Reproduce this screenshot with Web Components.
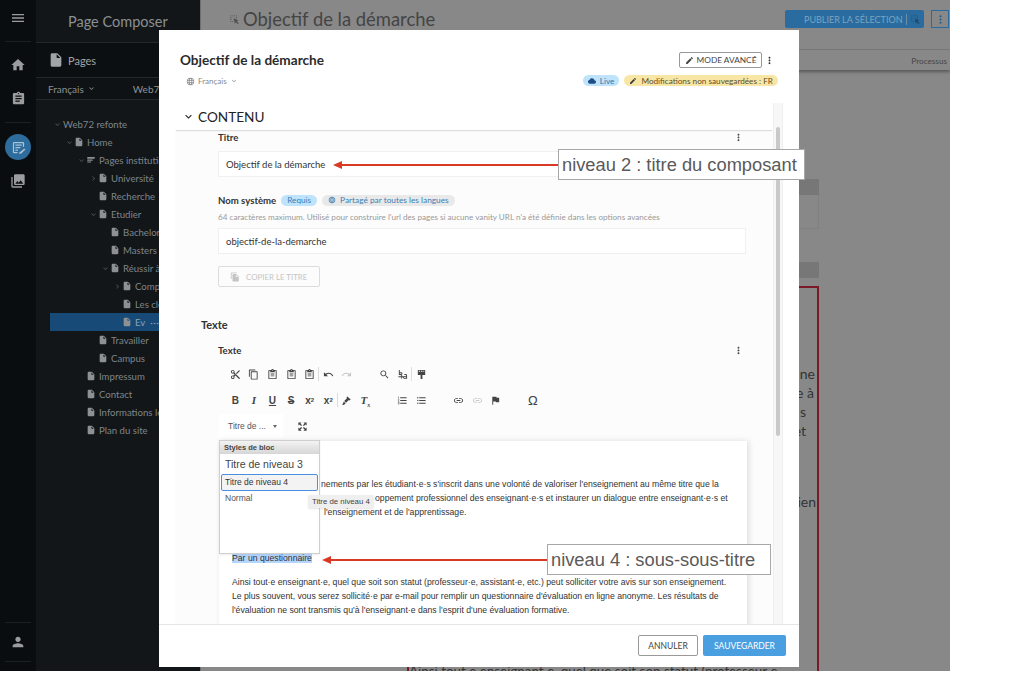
<!DOCTYPE html>
<html lang="fr">
<head>
<meta charset="utf-8">
<title>Page Composer</title>
<style>
  html, body { margin: 0; background: #fff; }
  body { font-family: "Lato", "Open Sans", sans-serif; }
</style>
</head>
<body>
<app-shell>
  <nav-rail slot="rail"></nav-rail>
  <page-sidebar slot="side">
    <tree-row level="-1" chev="open">Web72 refonte</tree-row>
    <tree-row level="0" chev="open" icon="file">Home</tree-row>
    <tree-row level="1" chev="open" icon="list">Pages institutionnelles</tree-row>
    <tree-row level="2" chev="closed" icon="file">Université</tree-row>
    <tree-row level="2" icon="file">Recherche</tree-row>
    <tree-row level="2" chev="open" icon="file">Etudier</tree-row>
    <tree-row level="3" icon="file">Bachelors</tree-row>
    <tree-row level="3" icon="file">Masters</tree-row>
    <tree-row level="3" chev="open" icon="file">Réussir à l'université</tree-row>
    <tree-row level="4" chev="closed" icon="file">Compétences</tree-row>
    <tree-row level="4" icon="file">Les clés</tree-row>
    <tree-row level="4" icon="file" selected>Ev</tree-row>
    <tree-row level="2" icon="file">Travailler</tree-row>
    <tree-row level="2" icon="file">Campus</tree-row>
    <tree-row level="1" icon="file">Impressum</tree-row>
    <tree-row level="1" icon="file">Contact</tree-row>
    <tree-row level="1" icon="file">Informations légales</tree-row>
    <tree-row level="1" icon="file">Plan du site</tree-row>
  </page-sidebar>
  <main-backdrop slot="main"></main-backdrop>
  <composer-modal slot="over"></composer-modal>
  <note-callout slot="over" style="left:333px;top:149px" box="247">niveau 2 : titre du composant</note-callout>
  <note-callout slot="over" style="left:322px;top:544px" box="224">niveau 4 : sous-sous-titre</note-callout>
</app-shell>

<script>
// icones material, meme viewbox 24x24 partout
const ICONS = {
  menu: "M3 18h18v-2H3v2zm0-5h18v-2H3v2zm0-7v2h18V6H3z",
  home: "M10 20v-6h4v6h5v-8h3L12 3 2 12h3v8z",
  clipboard: "M19 3h-4.18C14.4 1.84 13.3 1 12 1c-1.3 0-2.4.84-2.82 2H5c-1.1 0-2 .9-2 2v14c0 1.1.9 2 2 2h14c1.1 0 2-.9 2-2V5c0-1.1-.9-2-2-2zm-7 0c.55 0 1 .45 1 1s-.45 1-1 1-1-.45-1-1 .45-1 1-1zm2 14H7v-2h7v2zm3-4H7v-2h10v2zm0-4H7V7h10v2z",
  photos: "M22 16V4c0-1.1-.9-2-2-2H8c-1.1 0-2 .9-2 2v12c0 1.1.9 2 2 2h12c1.1 0 2-.9 2-2zm-11-4l2.03 2.71L16 11l4 5H8l3-4zM2 6v14c0 1.1.9 2 2 2h14v-2H4V6H2z",
  person: "M12 12c2.21 0 4-1.79 4-4s-1.79-4-4-4-4 1.79-4 4 1.79 4 4 4zm0 2c-2.67 0-8 1.34-8 4v2h16v-2c0-2.66-5.33-4-8-4z",
  file: "M6 2c-1.1 0-1.99.9-1.99 2L4 20c0 1.1.89 2 1.99 2H18c1.1 0 2-.9 2-2V8l-6-6H6zm7 7V3.5L18.5 9H13z",
  list: "M3 5h18v4H3zM3 11h13v2.5H3zM3 15.5h9V18H3z",
  edit: "M3 17.25V21h3.75L17.81 9.94l-3.75-3.75L3 17.25zM20.71 7.04c.39-.39.39-1.02 0-1.41l-2.34-2.34c-.39-.39-1.02-.39-1.41 0l-1.83 1.83 3.75 3.75 1.83-1.83z",
  cloud: "M19.35 10.04C18.67 6.59 15.64 4 12 4 9.11 4 6.6 5.64 5.35 8.04 2.34 8.36 0 10.91 0 14c0 3.31 2.69 6 6 6h13c2.76 0 5-2.24 5-5 0-2.64-2.05-4.78-4.65-4.96z",
  dots: "M12 8c1.1 0 2-.9 2-2s-.9-2-2-2-2 .9-2 2 .9 2 2 2zm0 2c-1.1 0-2 .9-2 2s.9 2 2 2 2-.9 2-2-.9-2-2-2zm0 6c-1.1 0-2 .9-2 2s.9 2 2 2 2-.9 2-2-.9-2-2-2z",
  globe: "M11.99 2C6.47 2 2 6.48 2 12s4.47 10 9.99 10C17.52 22 22 17.52 22 12S17.52 2 11.99 2zm6.93 6h-2.95c-.32-1.25-.78-2.45-1.38-3.56 1.84.63 3.37 1.91 4.33 3.56zM12 4.04c.83 1.2 1.48 2.53 1.91 3.96h-3.82c.43-1.43 1.08-2.76 1.91-3.96zM4.26 14C4.1 13.36 4 12.69 4 12s.1-1.36.26-2h3.38c-.08.66-.14 1.32-.14 2 0 .68.06 1.34.14 2H4.26zm.82 2h2.95c.32 1.25.78 2.45 1.38 3.56-1.84-.63-3.37-1.9-4.33-3.56zm2.95-8H5.08c.96-1.66 2.49-2.93 4.33-3.56C8.81 5.55 8.35 6.75 8.03 8zM12 19.96c-.83-1.2-1.48-2.53-1.91-3.96h3.82c-.43 1.43-1.08 2.76-1.91 3.96zM14.34 14H9.66c-.09-.66-.16-1.32-.16-2 0-.68.07-1.35.16-2h4.68c.09.65.16 1.32.16 2 0 .68-.07 1.34-.16 2zm.25 5.56c.6-1.11 1.06-2.31 1.38-3.56h2.95c-.96 1.65-2.49 2.93-4.33 3.56zM16.36 14c.08-.66.14-1.32.14-2 0-.68-.06-1.34-.14-2h3.38c.16.64.26 1.31.26 2s-.1 1.36-.26 2h-3.38z",
  chevdown: "M7.41 8.59L12 13.17l4.59-4.58L18 10l-6 6-6-6z",
  chevright: "M8.59 16.59L13.17 12 8.59 7.41 10 6l6 6-6 6z",
  copyfile: "M16 1H4c-1.1 0-2 .9-2 2v14h2V3h12V1zm-1 4l6 6v10c0 1.1-.9 2-2 2H8c-1.1 0-2-.9-2-2V7c0-1.1.9-2 2-2h7zm-1 7h5.5L14 6.5V12z",
  cut: "M9.64 7.64c.23-.5.36-1.05.36-1.64 0-2.21-1.79-4-4-4S2 3.79 2 6s1.79 4 4 4c.59 0 1.14-.13 1.64-.36L10 12l-2.36 2.36C7.14 14.13 6.59 14 6 14c-2.21 0-4 1.79-4 4s1.79 4 4 4 4-1.79 4-4c0-.59-.13-1.14-.36-1.64L12 14l7 7h3v-1L9.64 7.64zM6 8c-1.1 0-2-.89-2-2s.9-2 2-2 2 .89 2 2-.9 2-2 2zm0 12c-1.1 0-2-.89-2-2s.9-2 2-2 2 .89 2 2-.9 2-2 2zm6-7.5c-.28 0-.5-.22-.5-.5s.22-.5.5-.5.5.22.5.5-.22.5-.5.5zM19 3l-6 6 2 2 7-7V3h-3z",
  copy: "M16 1H4c-1.1 0-2 .9-2 2v14h2V3h12V1zm3 4H8c-1.1 0-2 .9-2 2v14c0 1.1.9 2 2 2h11c1.1 0 2-.9 2-2V7c0-1.1-.9-2-2-2zm0 16H8V7h11v14z",
  paste: "M19 2h-4.18C14.4.84 13.3 0 12 0c-1.3 0-2.4.84-2.82 2H5c-1.1 0-2 .9-2 2v16c0 1.1.9 2 2 2h14c1.1 0 2-.9 2-2V4c0-1.1-.9-2-2-2zm-7 0c.55 0 1 .45 1 1s-.45 1-1 1-1-.45-1-1 .45-1 1-1zm7 18H5V4h2v3h10V4h2v16zM8 10h8v2H8zM8 14h8v2H8z",
  undo: "M12.5 8c-2.65 0-5.05.99-6.9 2.6L2 7v9h9l-3.62-3.62c1.39-1.16 3.16-1.88 5.12-1.88 3.54 0 6.55 2.31 7.6 5.5l2.37-.78C21.08 11.03 17.15 8 12.5 8z",
  redo: "M18.4 10.6C16.55 8.99 14.15 8 11.5 8c-4.65 0-8.58 3.03-9.96 7.22L3.9 16c1.05-3.19 4.05-5.5 7.6-5.5 1.95 0 3.73.72 5.12 1.88L13 16h9V7l-3.6 3.6z",
  search: "M15.5 14h-.79l-.28-.27C15.41 12.59 16 11.11 16 9.5 16 5.91 13.09 3 9.5 3S3 5.91 3 9.5 5.91 16 9.5 16c1.61 0 3.09-.59 4.23-1.57l.27.28v.79l5 4.99L20.49 19l-4.99-5zm-6 0C7.01 14 5 11.99 5 9.5S7.01 5 9.5 5 14 7.01 14 9.5 11.99 14 9.5 14z",
  replace: "M4 2h2v5h3a3 3 0 0 1 0 6H4zm2 7v2h3a1 1 0 0 0 0-2zM3 16h7l-2-2 1.2-1.2L13.4 17l-4.2 4.2L8 20l2-2H3zM16 11h3a3 3 0 0 1 3 3v7h-6a3 3 0 0 1 0-6h4v-1a1 1 0 0 0-1-1h-3zm0 6a1 1 0 0 0 0 2h4v-2z",
  blocks: "M4 2h16v11h-6v9h-4v-9H4zM6 4v2h3V4zm5 0v2h3V4zm5 0v2h2V4z",
  brush: "M14 3l7 7-2 2-2-1-6 6-4-4 6-6-1-2zM6 14l4 4c-1 2-4 4-8 4 2-2 3-5 4-8z",
  numbered: "M2 17h2v.5H3v1h1v.5H2v1h3v-4H2v1zm1-9h1V4H2v1h1v3zm-1 3h1.8L2 13.1v.9h3v-1H3.2L5 10.9V10H2v1zm5-6v2h14V5H7zm0 14h14v-2H7v2zm0-6h14v-2H7v2z",
  bulleted: "M4 10.5c-.83 0-1.5.67-1.5 1.5s.67 1.5 1.5 1.5 1.5-.67 1.5-1.5-.67-1.5-1.5-1.5zm0-6c-.83 0-1.5.67-1.5 1.5S3.17 7.5 4 7.5 5.5 6.83 5.5 6 4.83 4.5 4 4.5zm0 12c-.83 0-1.5.68-1.5 1.5s.68 1.5 1.5 1.5 1.5-.68 1.5-1.5-.67-1.5-1.5-1.5zM7 19h14v-2H7v2zm0-6h14v-2H7v2zm0-8v2h14V5H7z",
  link: "M3.9 12c0-1.71 1.39-3.1 3.1-3.1h4V7H7c-2.76 0-5 2.24-5 5s2.24 5 5 5h4v-1.9H7c-1.71 0-3.1-1.39-3.1-3.1zM8 13h8v-2H8v2zm9-6h-4v1.9h4c1.71 0 3.1 1.39 3.1 3.1s-1.39 3.1-3.1 3.1h-4V17h4c2.76 0 5-2.24 5-5s-2.24-5-5-5z",
  flag: "M14.4 6L14 4H5v17h2v-7h5.6l.4 2h7V6z",
  expand: "M3 3h7L7.5 5.5 11 9l-2 2-3.5-3.5L3 10zM21 3v7l-2.5-2.5L15 11l-2-2 3.5-3.5L14 3zM3 21v-7l2.5 2.5L9 13l2 2-3.5 3.5L10 21zM21 21h-7l2.5-2.5L13 15l2-2 3.5 3.5L21 14z",
  picker: "M3 3h2v2H3zM7 3h2v2H7zM11 3h2v2h-2zM15 3h2v2h-2zM3 7h2v2H3zM3 11h2v2H3zM3 15h2v2H3zM7 15h2v2H7zM15 7h2v2h-2zM10 9l11 5-4.5 1.5L21 20l-2 2-4.5-4.5L13 22z",
  pageedit: "M5 3h14a2 2 0 0 1 2 2v5l-2 2V5H5v14h6l-1 2H5a2 2 0 0 1-2-2V5a2 2 0 0 1 2-2zm2 4h10v2H7zm0 4h8v2H7zm0 4h4v2H7zm14.5-1.5l1.5 1.5-7 7H13v-1.5z"
};

class MatIcon extends HTMLElement {
  connectedCallback() {
    const s = this.getAttribute("size") || 12;
    const shadow = this.shadowRoot || this.attachShadow({ mode: "open" });
    shadow.innerHTML = `
      <style>
        :host{ display:inline-flex; flex:none; line-height:0; }
        svg{ width:${s}px; height:${s}px; fill:currentColor; }
      </style>
      <svg viewBox="0 0 24 24"><path d="${ICONS[this.getAttribute("name")] || ""}"/></svg>`;
  }
}
customElements.define("mat-icon", MatIcon);

// la fenetre complete : 950x671, le reste est blanc
class AppShell extends HTMLElement {
  constructor() {
    super();
    this.attachShadow({ mode: "open" }).innerHTML = `
      <style>
        :host{
          display:flex;
          position:relative;
          width:950px;
          height:671px;
          overflow:hidden;
        }
      </style>
      <slot name="rail"></slot>
      <slot name="side"></slot>
      <slot name="main"></slot>
      <slot name="over"></slot>`;
  }
}
customElements.define("app-shell", AppShell);

class NavRail extends HTMLElement {
  constructor() {
    super();
    this.attachShadow({ mode: "open" }).innerHTML = `
      <style>
        :host{
          display:flex;
          flex-direction:column;
          align-items:center;
          width:36px;
          flex:none;
          background:#0a0d0f;
          color:#9a9c9d;
        }
        .slot{ height:32px; display:flex; align-items:center; justify-content:center; }
        hr{ width:26px; height:1px; border:0; margin:0; background:#1c2022; }
        .active{
          width:26px; height:26px; border-radius:50%;
          background:#2d6c9c; color:#a9c4d8;
          display:flex; align-items:center; justify-content:center;
          margin:11px 0 3px;
        }
        .grow{ flex:1; }
      </style>
      <div class="slot" style="height:35px"><mat-icon name="menu" size="16"></mat-icon></div>
      <hr style="margin-top:6px">
      <div class="slot" style="margin-top:7px"><mat-icon name="home" size="16"></mat-icon></div>
      <div class="slot" style="margin-top:1px"><mat-icon name="clipboard" size="15"></mat-icon></div>
      <hr style="margin-top:8px">
      <div class="active"><mat-icon name="pageedit" size="15"></mat-icon></div>
      <div class="slot" style="margin-top:2px"><mat-icon name="photos" size="16"></mat-icon></div>
      <div class="grow"></div>
      <hr>
      <div class="slot" style="height:38px"><mat-icon name="person" size="16"></mat-icon></div>
      <hr style="margin-bottom:9px">`;
  }
}
customElements.define("nav-rail", NavRail);

class PageSidebar extends HTMLElement {
  constructor() {
    super();
    this.attachShadow({ mode: "open" }).innerHTML = `
      <style>
        :host{
          display:block;
          width:164px;
          flex:none;
          background:#121619;
          color:#7f8589;
          font-size:10px;
        }
        .brand{
          height:43px; box-sizing:border-box; border-bottom:1px solid #24282b;
          padding-left:32px; display:flex; align-items:center;
          font-size:14.5px; color:#8b9093;
        }
        .pages{
          height:35px; box-sizing:border-box; background:#0c0f11;
          border-bottom:1px solid #24282b;
          padding-left:12px; display:flex; align-items:center; gap:4px;
          font-size:11px; color:#a0a4a6;
        }
        .lang{
          height:22px; box-sizing:border-box; border-bottom:1px solid #24282b;
          background:#0e1214; padding-left:12px; display:flex; align-items:center;
          color:#8b9093; white-space:nowrap;
        }
        .lang mat-icon{ margin:0 37px 0 3px; }
        .tree{ padding-top:15px; }
      </style>
      <div class="brand">Page Composer</div>
      <div class="pages"><mat-icon name="file" size="16"></mat-icon>Pages</div>
      <div class="lang">Français<mat-icon name="chevdown" size="9"></mat-icon>Web72 refonte</div>
      <div class="tree"><slot></slot></div>`;
  }
}
customElements.define("page-sidebar", PageSidebar);

class TreeRow extends HTMLElement {
  connectedCallback() {
    const level = +this.getAttribute("level");
    const chev = this.getAttribute("chev");
    const icon = this.getAttribute("icon");
    const shadow = this.shadowRoot || this.attachShadow({ mode: "open" });
    shadow.innerHTML = `
      <style>
        :host{
          display:flex;
          align-items:center;
          height:18px;
          white-space:nowrap;
          padding-left:${29 + 12 * level}px;
          color:#7f8589;
          font-size:9.6px;
        }
        :host([selected]){
          background:linear-gradient(to right, transparent 14px, #184a78 14px);
          color:#8aa3b8;
        }
        .chev{ width:9px; flex:none; display:flex; color:#4e5458; }
        mat-icon{ margin-right:3px; color:#8d9194; }
        .chev mat-icon{ margin:0; color:inherit; }
        .more{ margin-left:5px; letter-spacing:.5px; }
      </style>
      <span class="chev" style="${icon ? "" : "margin-right:1px"}">${chev ? `<mat-icon name="${chev === "open" ? "chevdown" : "chevright"}" size="9"></mat-icon>` : ""}</span>
      ${icon ? `<mat-icon name="${icon}" size="10"></mat-icon>` : ""}
      <slot></slot>
      ${this.hasAttribute("selected") ? '<span class="more">···</span>' : ""}`;
  }
}
customElements.define("tree-row", TreeRow);

// la page derriere le voile gris, on n'en voit que les bords
class MainBackdrop extends HTMLElement {
  constructor() {
    super();
    this.attachShadow({ mode: "open" }).innerHTML = `
      <style>
        :host{
          display:flex;
          flex-direction:column;
          flex:1;
          min-width:0;
          background:#888;
          color:#3f3f3f;
          border-left:1px solid #6f6f6f;
          box-sizing:border-box;
        }
        .top{ height:50px; flex:none; box-sizing:border-box; border-bottom:1px solid #7a7a7a; display:flex; padding:10px 1px 0 28px; }
        .pick{ margin:4px 3px 0 0; color:#4d4d4d; }
        h1{ margin:-4px 0 0; font-size:18.4px; font-weight:400; line-height:26px; flex:1; color:#444; }
        .publish{
          height:18px; width:139px; box-sizing:border-box; display:flex;
          background:#2a6c9f; border-radius:2px; color:#7ba3c2; font-size:9px;
          align-items:center; margin-right:7px;
        }
        .publish span{ padding-left:19px; width:122px; box-sizing:border-box; border-right:1px solid #6f8fa6; white-space:nowrap; }
        .publish mat-icon{ margin-left:3px; color:#1d4a6e; }
        .more{ width:18px; height:18px; box-sizing:border-box; border:1px solid #2a6c9f; color:#2a5f8a; display:flex; align-items:center; justify-content:center; }
        .tabs{
          height:20px; flex:none; box-sizing:border-box; padding:6px 3px 0 0; text-align:right;
          font-size:8.2px; color:#464646; box-shadow:0 2px 3px rgba(0,0,0,.35); line-height:10px;
        }
        .page{ padding:109px 0 0 206px; width:412px; font-size:14px; }
        .bar{ height:16px; background:#777; }
        .box{ height:34px; box-sizing:border-box; border:1px solid #808080; border-top:0; }
        .frame{
          margin-top:8px; height:500px; box-sizing:border-box;
          border:2px solid #7a1a28; border-bottom:0;
          padding-top:76px; color:#333; font-size:14px; line-height:19px; white-space:nowrap;
        }
        .tail{ text-align:right; }
        .last{ margin:151px 0 0 0; font-size:13.4px; line-height:19px; }
      </style>
      <div class="top">
        <mat-icon class="pick" name="picker" size="11"></mat-icon>
        <h1>Objectif de la démarche</h1>
        <div class="publish"><span>PUBLIER LA SÉLECTION</span><mat-icon name="picker" size="11"></mat-icon></div>
        <div class="more"><mat-icon name="dots" size="13"></mat-icon></div>
      </div>
      <div class="tabs">Processus</div>
      <div class="page">
        <div class="bar"></div>
        <div class="box"></div>
        <div class="bar" style="margin-top:33px"></div>
        <div class="frame">
          <div class="tail" style="padding-right:2px">ne</div>
          <div class="tail" style="padding-right:3px">e à</div>
          <div class="tail" style="padding-right:11px">s</div>
          <div class="tail" style="padding-right:11px">et</div>
          <div class="tail" style="padding-right:1px;margin-top:52px">ien</div>
          <div class="last">Ainsi tout·e enseignant·e, quel que soit son statut (professeur·e</div>
        </div>
      </div>`;
  }
}
customElements.define("main-backdrop", MainBackdrop);

class StatusBadge extends HTMLElement {
  connectedCallback() {
    const icon = this.getAttribute("icon");
    const shadow = this.shadowRoot || this.attachShadow({ mode: "open" });
    shadow.innerHTML = `
      <style>
        :host{
          display:inline-flex; align-items:center; gap:4px;
          height:11px; padding:0 var(--pad,5px); border-radius:6px;
          font-size:8.2px; white-space:nowrap;
          background:var(--bg,#bfe3fb); color:var(--fg,#2f74ad);
        }
        mat-icon{ color:var(--ic,#1d4f86); }
      </style>
      ${icon ? `<mat-icon name="${icon}" size="8"></mat-icon>` : ""}<slot></slot>`;
  }
}
customElements.define("status-badge", StatusBadge);

class FieldBlock extends HTMLElement {
  constructor() {
    super();
    this.attachShadow({ mode: "open" }).innerHTML = `
      <style>
        :host{ display:block; padding:0 27px 0 43px; }
        .head{ height:14px; display:flex; align-items:center; gap:5px; font-size:9.6px; font-weight:700; color:#333; }
        ::slotted(mat-icon){ margin-left:auto; margin-right:2px; color:#444; }
      </style>
      <div class="head"><slot name="label"></slot><slot name="badges"></slot><slot name="menu"></slot></div>
      <slot></slot>`;
  }
}
customElements.define("field-block", FieldBlock);

class TextInput extends HTMLElement {
  constructor() {
    super();
    this.attachShadow({ mode: "open" }).innerHTML = `
      <style>
        :host{
          display:flex; align-items:center; height:26px; box-sizing:border-box;
          background:#fff; border:1px solid #f0f0f0; padding-left:7px;
          font-size:9.5px; color:#333;
        }
      </style>
      <slot></slot>`;
  }
}
customElements.define("text-input", TextInput);

// barre ckeditor : pas de 18.6px, cellule vide quand il n'y a pas de bouton
class EditorToolbar extends HTMLElement {
  connectedCallback() {
    const labels = {
      B: "B", I: '<span class="it">I</span>', U: "<u>U</u>", S: "<s>S</s>",
      sub: "x<sub>2</sub>", sup: "x<sup>2</sup>", clear: '<span class="it">T<sub>x</sub></span>',
      omega: '<span class="omega">Ω</span>'
    };
    const row = this.getAttribute("cells").split(",").map((c) => {
      if (c === "") return '<i class="c"></i>';
      if (c === "|") return '<i class="sep"></i>';
      if (c[0] === "~") return `<i class="c off"><mat-icon name="${c.slice(1)}" size="11"></mat-icon></i>`;
      if (ICONS[c]) return `<i class="c"><mat-icon name="${c}" size="11"></mat-icon></i>`;
      return `<i class="c">${labels[c]}</i>`;
    }).join("");
    const shadow = this.shadowRoot || this.attachShadow({ mode: "open" });
    shadow.innerHTML = `
      <style>
        :host{ display:flex; height:26px; align-items:center; color:#444; font-size:10px; padding-left:7px; }
        .c{
          width:18.6px; flex:none; display:flex; align-items:center; justify-content:center;
          font-style:normal; font-family:"Liberation Sans", sans-serif; font-weight:700;
        }
        .sep{ width:1px; height:14px; background:#ddd; margin:0 -.5px; flex:none; }
        .off{ color:#c8c8c8; }
        .it{ font-style:italic; font-family:"Liberation Serif", serif; font-size:11px; }
        .omega{ font-size:13px; font-weight:400; }
        sub,sup{ font-size:6px; line-height:0; }
      </style>
      ${row}`;
  }
}
customElements.define("editor-toolbar", EditorToolbar);

class StyleMenu extends HTMLElement {
  constructor() {
    super();
    this.attachShadow({ mode: "open" }).innerHTML = `
      <style>
        :host{
          display:block; position:absolute; left:0; top:-1px; width:101px; height:114px;
          box-sizing:border-box; background:#fff; border:1px solid #cfcfcf;
          font-family:"Liberation Sans", sans-serif; color:#333;
          box-shadow:0 1px 2px rgba(0,0,0,.08);
        }
        .head{
          height:13px; padding-left:4px; font-size:7.5px; font-weight:700; line-height:13px;
          background:linear-gradient(#f3f3f3,#d6d6d6); color:#444;
        }
        .h3{ height:19px; margin-top:1px; padding-left:5px; font-size:10.5px; line-height:19px; color:#444; }
        .h4{
          height:17px; box-sizing:border-box; margin:0 1px; padding-left:3px;
          border:1.5px solid #4a90e2; border-radius:2px; background:#f3f3f3;
          font-size:8.5px; line-height:14px;
        }
        .p{ padding:1px 0 0 5px; font-size:8.5px; line-height:10px; margin-top:1px; color:#555; }
      </style>
      <div class="head">Styles de bloc</div>
      <div class="h3">Titre de niveau 3</div>
      <div class="h4">Titre de niveau 4</div>
      <div class="p">Normal</div>`;
  }
}
customElements.define("style-menu", StyleMenu);

class ComposerModal extends HTMLElement {
  constructor() {
    super();
    this.attachShadow({ mode: "open" }).innerHTML = `
      <style>
        :host{
          display:flex; flex-direction:column; position:absolute;
          left:159px; top:30px; width:640px; height:637px;
          background:#fff; color:#333;
        }
        .head{ height:73px; flex:none; padding:0 21px; box-sizing:border-box; display:flex; justify-content:space-between; }
        h2{ margin:21px 0 0; font-size:13.6px; line-height:18px; font-weight:700; color:#2b2b2b; }
        .lang{ display:flex; align-items:center; gap:3px; margin-top:7px; margin-left:6px; font-size:8px; color:#888; }
        .actions{ display:flex; flex-direction:column; align-items:flex-end; padding-top:22px; }
        .row{ display:flex; align-items:center; gap:2px; margin-right:3px; }
        .adv{
          width:83px; height:16px; box-sizing:border-box; border:1px solid #999; border-radius:2px;
          display:flex; align-items:center; justify-content:center; gap:3px;
          font-size:8.3px; color:#444;
        }
        .badges{ display:flex; gap:5px; margin-top:7px; }
        .body{ flex:1; min-height:0; display:flex; padding:0 16px; }
        .col{ flex:1; min-width:0; display:flex; flex-direction:column; }
        .title{
          height:27px; flex:none; display:flex; align-items:center; gap:3px; padding-left:7px;
          font-size:13.6px; color:#222; box-shadow:0 2px 1px -1px rgba(0,0,0,.12);
          position:relative; box-sizing:border-box;
        }
        .sheet{ flex:1; min-height:0; background:#fcfcfc; overflow:hidden; }
        .track{ width:10px; flex:none; box-sizing:border-box; background:#f7f7f7; border:1px solid #efefef; border-width:0 1px; padding:24px 2px 0; }
        .thumb{ height:309px; background:#c9c9c9; border-radius:3px; }
        .req{ --bg:#bfe3fb; --fg:#3d7fb5; --pad:6px; font-weight:400; }
        .share{ --bg:#e9e9e9; --fg:#3d7fb5; --ic:#3d7fb5; --pad:6px; font-size:8.3px; font-weight:400; }
        .help{ height:14px; margin-top:3px; font-size:8.15px; line-height:14px; color:#9a9a9a; white-space:nowrap; }
        .copy{
          width:102px; height:21px; margin-top:12px; box-sizing:border-box;
          border:1px solid #dcdcdc; border-radius:2px; display:flex; align-items:center;
          gap:6px; padding-left:11px; font-size:7.9px; color:#c4c4c4;
        }
        .section{ height:14px; margin:31px 0 11px 26px; font-size:11px; font-weight:700; line-height:14px; color:#333; }
        .tools{ margin:4px -1px 0 1px; }
        .pick-row{ display:flex; height:28px; padding-top:1px; box-sizing:border-box; align-items:flex-start; }
        .pick{
          width:64px; height:24px; background:#fff; display:flex; align-items:center; box-sizing:border-box;
          padding-left:9px; font:8.5px "Liberation Sans", sans-serif; color:#555; white-space:nowrap;
        }
        .pick i{ margin-left:auto; margin-right:6px; border:2px solid transparent; border-top:3px solid #666; border-bottom:0; }
        .zoom{ margin:7px 0 0 14px; color:#444; }
        .editor{
          position:relative; background:#fff; height:190px; box-sizing:border-box;
          padding:36px 0 0 13px; box-shadow:2px 0 6px rgba(0,0,0,.12);
          font:8.66px/14px "Liberation Sans", sans-serif; color:#333; white-space:nowrap;
        }
        p{ margin:0; }
        h4{ margin:32px 0 10px; font:inherit; }
        mark{ background:#b4d5fe; color:#333; }
        .tip{
          position:absolute; left:89px; top:54px; height:13px; padding:0 4px;
          background:#efefef; font-size:7.8px; line-height:13px; color:#444; border-radius:2px;
          box-shadow:0 1px 2px rgba(0,0,0,.1);
        }
        .foot{
          height:43px; flex:none; box-sizing:border-box; border-top:1px solid #e6e6e6;
          display:flex; justify-content:flex-end; align-items:center; gap:5px; padding:0 13px 1px 0;
        }
        .foot div{ height:21px; box-sizing:border-box; border-radius:2px; display:flex; align-items:center; justify-content:center; font-size:8.5px; }
        .cancel{ width:60px; border:1px solid #999; color:#444; }
        .save{ width:83px; background:#4a9fe0; color:#fff; }
      </style>
      <div class="head">
        <div>
          <h2>Objectif de la démarche</h2>
          <div class="lang"><mat-icon name="globe" size="9"></mat-icon>Français<mat-icon name="chevdown" size="8"></mat-icon></div>
        </div>
        <div class="actions">
          <div class="row">
            <div class="adv"><mat-icon name="edit" size="9"></mat-icon>MODE AVANCÉ</div>
            <mat-icon name="dots" size="11"></mat-icon>
          </div>
          <div class="badges">
            <status-badge icon="cloud">Live</status-badge>
            <status-badge icon="edit" style="--bg:#f8e6a5;--fg:#5c4f28;--ic:#3a3a3a">Modifications non sauvegardées : FR</status-badge>
          </div>
        </div>
      </div>
      <div class="body">
        <div class="col">
          <div class="title"><mat-icon name="chevdown" size="13"></mat-icon>CONTENU</div>
          <div class="sheet">
            <field-block>
              <span slot="label">Titre</span>
              <mat-icon slot="menu" name="dots" size="11"></mat-icon>
              <text-input style="margin-top:7px">Objectif de la démarche</text-input>
            </field-block>
            <field-block style="margin-top:16px">
              <span slot="label">Nom système</span>
              <status-badge slot="badges" class="req">Requis</status-badge>
              <status-badge slot="badges" class="share" icon="globe">Partagé par toutes les langues</status-badge>
              <div class="help">64 caractères maximum. Utilisé pour construire l'url des pages si aucune vanity URL n'a été définie dans les options avancées</div>
              <text-input style="margin-top:4px">objectif-de-la-demarche</text-input>
              <div class="copy"><mat-icon name="copyfile" size="10"></mat-icon>COPIER LE TITRE</div>
            </field-block>
            <div class="section">Texte</div>
            <field-block>
              <span slot="label">Texte</span>
              <mat-icon slot="menu" name="dots" size="11"></mat-icon>
              <div class="tools">
                <editor-toolbar cells="cut,copy,paste,paste,paste,|,undo,~redo,,search,replace,|,blocks"></editor-toolbar>
                <editor-toolbar cells="B,I,U,S,sub,sup,|,brush,clear,,numbered,bulleted,,link,~link,flag,,omega"></editor-toolbar>
                <div class="pick-row">
                  <div class="pick">Titre de ...<i></i></div>
                  <mat-icon class="zoom" name="expand" size="11"></mat-icon>
                </div>
                <div class="editor">
                  <style-menu></style-menu>
                  <div class="tip">Titre de niveau 4</div>
                  <p><span style="margin-left:89px">nements par les étudiant·e·s s'inscrit dans une volonté de valoriser l'enseignement au même titre que la</span><br>
                  <span style="margin-left:143px">oppement professionnel des enseignant·e·s et instaurer un dialogue entre enseignant·e·s et</span><br>
                  <span style="margin-left:92px">l'enseignement et de l'apprentissage.</span></p>
                  <h4><mark>Par un questionnaire</mark></h4>
                  <p>Ainsi tout·e enseignant·e, quel que soit son statut (professeur·e, assistant·e, etc.) peut solliciter votre avis sur son enseignement.<br>
                  Le plus souvent, vous serez sollicité·e par e-mail pour remplir un questionnaire d'évaluation en ligne anonyme. Les résultats de<br>
                  l'évaluation ne sont transmis qu'à l'enseignant·e dans l'esprit d'une évaluation formative.</p>
                </div>
              </div>
            </field-block>
          </div>
        </div>
        <div class="track"><div class="thumb"></div></div>
      </div>
      <div class="foot">
        <div class="cancel">ANNULER</div>
        <div class="save">SAUVEGARDER</div>
      </div>`;
  }
}
customElements.define("composer-modal", ComposerModal);

// fleche rouge + etiquette, posees par dessus la capture
class NoteCallout extends HTMLElement {
  connectedCallback() {
    const shadow = this.shadowRoot || this.attachShadow({ mode: "open" });
    shadow.innerHTML = `
      <style>
        :host{ position:absolute; display:flex; align-items:center; height:31px; }
        .tip{ border:4px solid transparent; border-right:9px solid #d93a26; border-left:0; flex:none; }
        .line{ width:216px; height:2px; background:#d93a26; flex:none; }
        .box{
          width:${this.getAttribute("box")}px; height:31px; box-sizing:border-box; flex:none;
          background:#fff; border:1px solid #a8a8a8; padding-left:3px;
          font:18.3px/29px "Liberation Sans", sans-serif; color:#5a5a5a; white-space:nowrap;
        }
      </style>
      <i class="tip"></i><i class="line"></i><div class="box"><slot></slot></div>`;
  }
}
customElements.define("note-callout", NoteCallout);
</script>
</body>
</html>
